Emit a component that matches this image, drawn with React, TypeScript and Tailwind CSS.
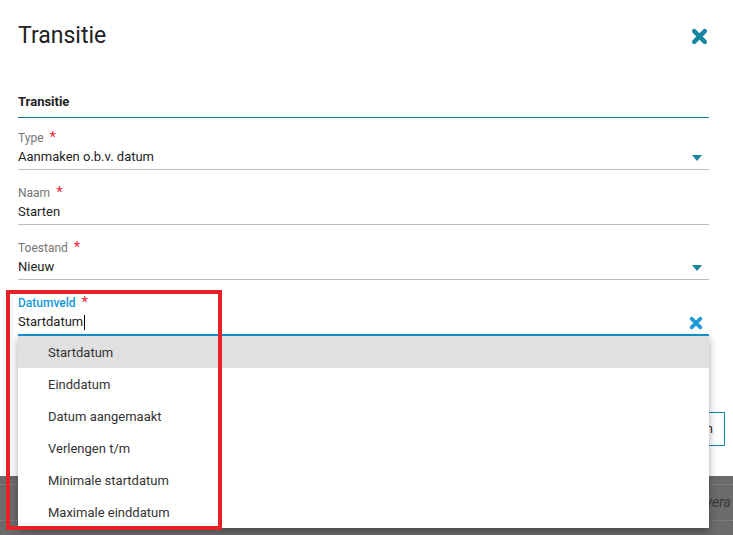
import React from 'react';

const font = { fontFamily: 'Roboto, "Liberation Sans", Arial, sans-serif' };

function Caret() {
  return (
    <svg width="10" height="6" viewBox="0 0 10 6" className="mr-[7px] mt-[2px]">
      <path d="M0 0h10L5 6z" fill="#17869f" />
    </svg>
  );
}

function Cross({ color, size }: { color: string; size: number }) {
  return (
    <svg width={size} height={size} viewBox="0 0 16 16">
      <path d="M3 3l10 10M13 3L3 13" stroke={color} strokeWidth="4.2" strokeLinecap="round" />
    </svg>
  );
}

interface FieldProps {
  label: string;
  value: string;
  caret?: boolean;
}

function Field({ label, value, caret }: FieldProps) {
  return (
    <div className="pt-[14px]">
      <div className="h-4 text-[12px] leading-4 text-[#757575]">
        {label}
        <span className="ml-[6px] text-[15px] text-[#f0283c]">*</span>
      </div>
      <div className="mt-[3px] flex h-[18px] items-center justify-between text-[13px] leading-[18px] text-[#222]">
        <span>{value}</span>
        {caret && <Caret />}
      </div>
      <div className="mt-[3px] h-px bg-[#bdbdbd]" />
    </div>
  );
}

const items = [
  'Startdatum',
  'Einddatum',
  'Datum aangemaakt',
  'Verlengen t/m',
  'Minimale startdatum',
  'Maximale einddatum',
];

export default function App() {
  return (
    <div className="relative h-[535px] w-full overflow-hidden bg-white" style={font}>
      {/* Dialog */}
      <div className="pl-[18px] pr-[24px]">
        <div className="flex h-[70px] items-center justify-between pt-[3px]">
          <h1 className="text-[23px] font-normal text-[#222]">Transitie</h1>
          <div className="mr-[1px]">
            <Cross color="#17869f" size={17} />
          </div>
        </div>

        <div className="mt-[23px] border-b border-[#1b7f94] pb-[6px] text-[13px] font-bold leading-[18px] text-[#222]">
          Transitie
        </div>

        <div className="-mt-[3px]">
          <Field label="Type" value="Aanmaken o.b.v. datum" caret />
          <Field label="Naam" value="Starten" />
          <Field label="Toestand" value="Nieuw" caret />

          {/* Datumveld (open) */}
          <div className="relative z-20 pt-[14px]">
            <div className="h-4 text-[12px] font-medium leading-4 text-[#0f98d8]">
              Datumveld
              <span className="ml-[6px] text-[15px] font-normal text-[#f0283c]">*</span>
            </div>
            <div className="mt-[3px] flex h-[18px] items-center justify-between text-[13px] leading-[18px] text-[#222]">
              <span className="flex items-center">
                Startdatum
                <span className="ml-px inline-block h-[15px] w-px bg-black" />
              </span>
              <div className="mr-[6px] mt-[2px]">
                <Cross color="#1d9ad6" size={14} />
              </div>
            </div>
            <div className="mt-[3px] h-[2px] bg-[#0f98d8]" />

            <div className="absolute left-0 right-0 top-full bg-white shadow-[0_3px_8px_rgba(0,0,0,0.35)]">
              {items.map((item, i) => (
                <div
                  key={item}
                  className={`flex h-8 items-center pl-[30px] pt-[2px] text-[13px] text-[#333] ${
                    i === 0 ? 'bg-[#e0e0e0]' : ''
                  }`}
                >
                  {item}
                </div>
              ))}
            </div>
          </div>
        </div>
      </div>

      {/* Buttons behind the dropdown */}
      <div className="mt-[76px] flex justify-end pr-[8px]">
        <button className="h-[34px] border border-[#17869f] bg-white px-[11px] text-[13px] text-[#222]">
          Opslaan
        </button>
      </div>

      {/* Page footer behind the dialog */}
      <div className="mt-[30px] h-[59px] bg-[#6b6b6b] pt-[8px]">
        <div className="border-t border-dotted border-[#8c8c8c]" />
        <div className="flex h-[35px] items-center justify-end whitespace-nowrap pr-[2px] text-[14px] italic text-[#3a3a3a]">
          vera
        </div>
        <div className="border-t border-dotted border-[#8c8c8c]" />
      </div>

      {/* Annotation */}
      <div className="pointer-events-none absolute left-[6px] top-[290px] z-30 h-[240px] w-[216px] border-4 border-[#e8202a]" />
    </div>
  );
}
